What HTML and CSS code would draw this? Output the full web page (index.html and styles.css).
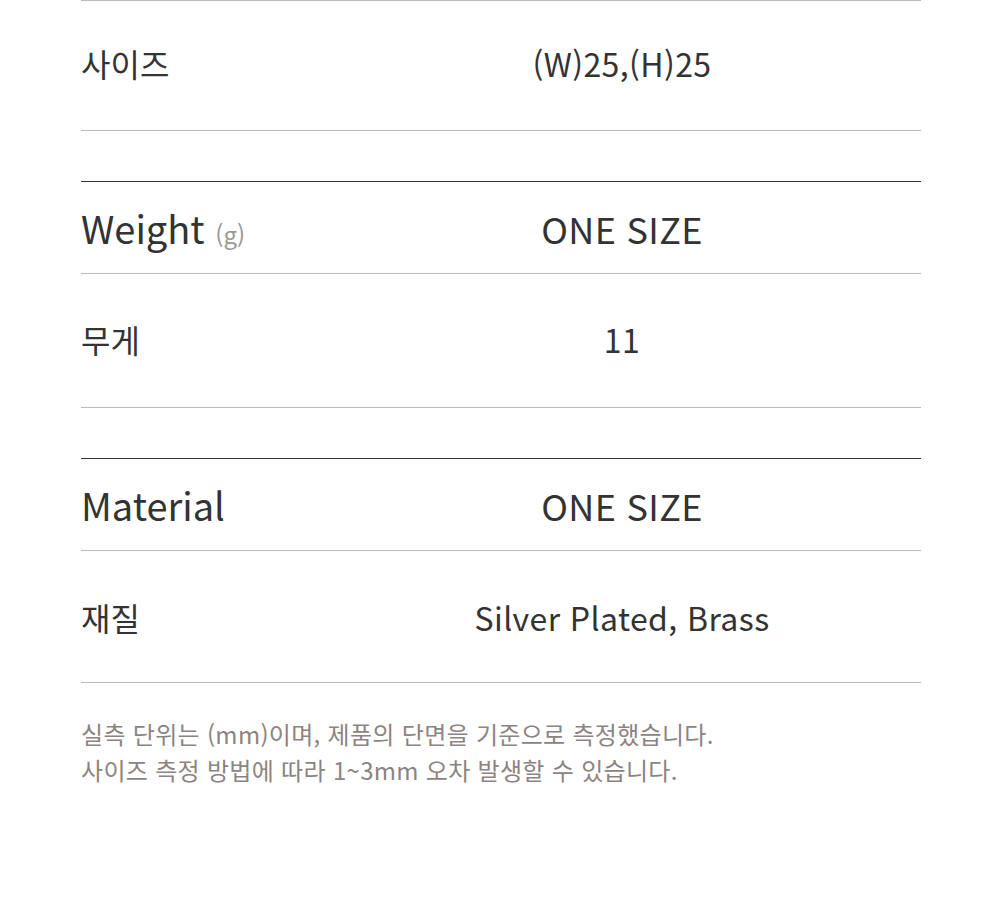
FILE: index.html
```html
<!DOCTYPE html>
<html lang="ko">
<head>
<meta charset="utf-8">
<link rel="stylesheet" href="styles.css">
</head>
<body>
<div class="wrap">
  <section class="spec first">
    <div class="row body r1">
      <div class="label">사이즈</div>
      <div class="value">(W)25,(H)25</div>
    </div>
  </section>
  <section class="spec">
    <div class="row head">
      <div class="label">Weight <span class="unit">(g)</span></div>
      <div class="value">ONE SIZE</div>
    </div>
    <div class="row body r2">
      <div class="label">무게</div>
      <div class="value">11</div>
    </div>
  </section>
  <section class="spec">
    <div class="row head">
      <div class="label">Material</div>
      <div class="value">ONE SIZE</div>
    </div>
    <div class="row body r3">
      <div class="label">재질</div>
      <div class="value">Silver Plated, Brass</div>
    </div>
  </section>
  <p class="note">실측 단위는 (mm)이며, 제품의 단면을 기준으로 측정했습니다.<br>사이즈 측정 방법에 따라 1~3mm 오차 발생할 수 있습니다.</p>
</div>
</body>
</html>
```

FILE: styles.css
```css
html, body {
  margin: 0;
  padding: 0;
  background: #fff;
}
body {
  font-family: "Noto Sans CJK KR", "Noto Sans", sans-serif;
  color: #333;
}
.wrap {
  width: 840px;
  margin-left: 81px;
}
.spec {
  border-top: 1px solid #333;
  margin-top: 50px;
}
.spec.first {
  border-top: 1px solid #bbb;
  margin-top: 0;
}
.row {
  display: grid;
  grid-template-columns: 242px 1fr;
  align-items: center;
  border-bottom: 1px solid #bbb;
  box-sizing: border-box;
}
.value {
  text-align: center;
}
.head {
  height: 92px;
  font-size: 38px;
}
.head .value {
  font-size: 36px;
  letter-spacing: 0.3px;
}
.unit {
  font-size: 24px;
  color: #999;
}
.body {
  font-size: 32px;
}
.body .value {
  letter-spacing: 0.4px;
}
.r1 { height: 130px; padding-bottom: 6px; }
.r2 { height: 134px; padding-bottom: 4px; }
.r3 { height: 132px; }
.note {
  margin: 33px 0 0;
  font-size: 24px;
  line-height: 36px;
  letter-spacing: 0.3px;
  color: #8c8482;
}
```
